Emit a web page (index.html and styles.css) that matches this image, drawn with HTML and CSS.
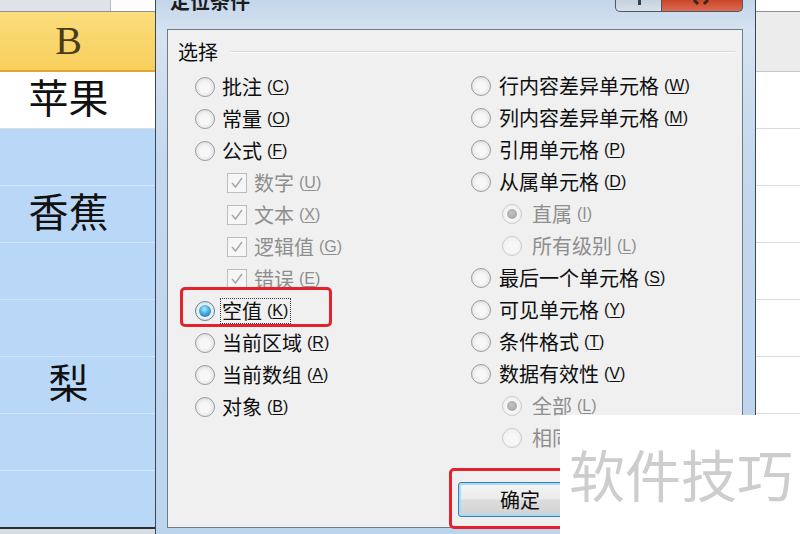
FILE: index.html
```html
<html>
<head>
    <meta charset="utf-8">
    <link rel="stylesheet" href="styles.css">
</head>
<body>

<div class="screen">

  <div class="sheet sheet-left">
    <div class="fbar"><div class="fbar-box"></div></div>
    <div class="colhead">B</div>
    <div class="cell">苹果</div>
    <div class="cell sel"></div>
    <div class="cell sel">香蕉</div>
    <div class="cell sel"></div>
    <div class="cell sel"></div>
    <div class="cell sel">梨</div>
    <div class="cell sel"></div>
    <div class="cell sel"></div>
  </div>

  <div class="dialog">
    <div class="titlebar">
      <div class="title">定位条件</div>
      <div class="caption-btns">
        <div class="cap cap-help">
          <svg width="47" height="12" viewBox="0 0 47 12"><rect x="22" y="0" width="3" height="5" fill="#3a3f45"/></svg>
        </div>
        <div class="cap cap-close">
          <svg width="80" height="12" viewBox="0 0 80 12"><path d="M32 0 L36 4 M46 0 L42 4" stroke="#3a2520" stroke-width="3"/></svg>
        </div>
      </div>
    </div>

    <div class="client">
      <div class="group-head">
        <span class="group-label">选择</span>
        <span class="group-line"></span>
      </div>

      <div class="options">
        <div class="col col-left">
          <div class="opt"><span class="radio"></span>批注<span class="key">(<u>C</u>)</span></div>
          <div class="opt"><span class="radio"></span>常量<span class="key">(<u>O</u>)</span></div>
          <div class="opt"><span class="radio"></span>公式<span class="key">(<u>F</u>)</span></div>
          <div class="opt sub off"><span class="check"><svg width="14" height="14" viewBox="0 0 14 14"><path d="M2 7 L5.5 11 L12 2" fill="none" stroke="#a9a9a9" stroke-width="1.6"/></svg></span>数字<span class="key">(<u>U</u>)</span></div>
          <div class="opt sub off"><span class="check"><svg width="14" height="14" viewBox="0 0 14 14"><path d="M2 7 L5.5 11 L12 2" fill="none" stroke="#a9a9a9" stroke-width="1.6"/></svg></span>文本<span class="key">(<u>X</u>)</span></div>
          <div class="opt sub off"><span class="check"><svg width="14" height="14" viewBox="0 0 14 14"><path d="M2 7 L5.5 11 L12 2" fill="none" stroke="#a9a9a9" stroke-width="1.6"/></svg></span>逻辑值<span class="key">(<u>G</u>)</span></div>
          <div class="opt sub off"><span class="check"><svg width="14" height="14" viewBox="0 0 14 14"><path d="M2 7 L5.5 11 L12 2" fill="none" stroke="#a9a9a9" stroke-width="1.6"/></svg></span>错误<span class="key">(<u>E</u>)</span></div>
          <div class="opt marked"><span class="radio on"></span><span class="focus">空值<span class="key">(<u>K</u>)</span></span><span class="mark mark-empty"></span></div>
          <div class="opt"><span class="radio"></span>当前区域<span class="key">(<u>R</u>)</span></div>
          <div class="opt"><span class="radio"></span>当前数组<span class="key">(<u>A</u>)</span></div>
          <div class="opt"><span class="radio"></span>对象<span class="key">(<u>B</u>)</span></div>
        </div>

        <div class="col col-right">
          <div class="opt"><span class="radio"></span>行内容差异单元格<span class="key">(<u>W</u>)</span></div>
          <div class="opt"><span class="radio"></span>列内容差异单元格<span class="key">(<u>M</u>)</span></div>
          <div class="opt"><span class="radio"></span>引用单元格<span class="key">(<u>P</u>)</span></div>
          <div class="opt"><span class="radio"></span>从属单元格<span class="key">(<u>D</u>)</span></div>
          <div class="opt sub2 off"><span class="radio dis dot"></span>直属<span class="key">(<u>I</u>)</span></div>
          <div class="opt sub2 off"><span class="radio dis"></span>所有级别<span class="key">(<u>L</u>)</span></div>
          <div class="opt"><span class="radio"></span>最后一个单元格<span class="key">(<u>S</u>)</span></div>
          <div class="opt"><span class="radio"></span>可见单元格<span class="key">(<u>Y</u>)</span></div>
          <div class="opt"><span class="radio"></span>条件格式<span class="key">(<u>T</u>)</span></div>
          <div class="opt"><span class="radio"></span>数据有效性<span class="key">(<u>V</u>)</span></div>
          <div class="opt sub2 off"><span class="radio dis dot"></span>全部<span class="key">(<u>L</u>)</span></div>
          <div class="opt sub2 off"><span class="radio dis"></span>相同</div>
        </div>
      </div>

      <div class="footer">
        <div class="btn btn-default">确定<span class="mark mark-ok"></span></div>
      </div>
    </div>
  </div>

  <div class="sheet sheet-right">
    <div class="fbar white"></div>
    <div class="colhead grey"></div>
    <div class="cell"></div>
    <div class="cell"></div>
    <div class="cell"></div>
    <div class="cell"></div>
    <div class="cell"></div>
    <div class="cell"></div>
    <div class="cell"></div>
    <div class="cell"></div>
  </div>

  <div class="watermark">软件技巧</div>
</div>

</body>
</html>
```

FILE: styles.css
```css
* {
  margin: 0px;
  padding: 0px;
  box-sizing: border-box;
}
body {
  width: 800px;
  height: 534px;
  overflow: hidden;
  background: #fff;
  font-family: "Noto Sans CJK SC", "Noto Sans", sans-serif;
}
.screen {
  position: relative;
  display: flex;
  width: 800px;
  height: 534px;
  overflow: hidden;
}

/* spreadsheet strips */
.sheet {
  display: flex;
  flex-direction: column;
  font-family: "Liberation Serif", "Noto Sans CJK SC", serif;
}
.sheet-left {
  width: 155px;
  flex: none;
  background: #d8dde3;
}
.sheet-right {
  flex: 1;
}
.fbar {
  height: 12px;
  flex: none;
  background: #dfe3e8;
  border-bottom: 1px solid #8e9296;
  display: flex;
  justify-content: flex-end;
}
.fbar-box {
  width: 45px;
  background: #fdfdfd;
  border-left: 1px solid #b8bcc0;
}
.fbar.white {
  background: #fff;
}
.colhead {
  height: 60px;
  flex: none;
  background: linear-gradient(#fbdd7c, #f7cf5c);
  border-bottom: 2px solid #e3a53a;
  color: #4a3c18;
  font-size: 40px;
  line-height: 58px;
  text-align: center;
  padding-right: 18px;
}
.colhead.grey {
  background: #ececec;
  border-bottom: 1px solid #c6c6c6;
}
.cell {
  height: 57px;
  flex: none;
  background: #fff;
  border-bottom: 1px solid #dadcdf;
  color: #111;
  font-size: 40px;
  line-height: 56px;
  text-align: center;
  padding-right: 18px;
}
.cell.sel {
  background: #b9d8f7;
  border-bottom-color: #d3e5f8;
}
.sheet-left .cell:last-child {
  border-bottom: 2px solid #2e2e2e;
  height: 58px;
}

/* dialog window */
.dialog {
  width: 601px;
  flex: none;
  display: flex;
  flex-direction: column;
  padding: 0 12px 6px 11px;
  background: linear-gradient(#c3d6ea, #d6e3f1 6%, #c4d8ee 30%, #bcd4ee);
  border-left: 1px solid #3d4650;
  border-right: 1px solid #3d4650;
}
.titlebar {
  height: 29px;
  flex: none;
  display: flex;
  align-items: flex-start;
}
.title {
  margin-top: -9px;
  padding-left: 3px;
  font-size: 20px;
  line-height: 20px;
  color: #1c1c1c;
  font-weight: bold;
}
.caption-btns {
  margin-left: auto;
  display: flex;
}
.cap {
  height: 12px;
  border: 1px solid #50585f;
  border-top: none;
}
.cap svg {
  display: block;
}
.cap-help {
  width: 47px;
  border-radius: 0 0 0 5px;
  background: linear-gradient(#c6d1dc, #d8e1ea);
}
.cap-close {
  width: 81px;
  border-left: none;
  border-radius: 0 0 5px 0;
  background: linear-gradient(#c9462a, #dc6a50);
}
.client {
  flex: 1;
  display: flex;
  flex-direction: column;
  background: #f0f0f0;
  border: 1px solid #6f7c88;
  padding: 10px 7px 0 10px;
  color: #0e0e0e;
  font-size: 20px;
}
.group-head {
  display: flex;
  align-items: center;
  height: 24px;
}
.group-label {
  line-height: 24px;
}
.group-line {
  flex: 1;
  margin-left: 12px;
  border-top: 1px solid #d5dadf;
  border-bottom: 1px solid #fff;
}
.options {
  display: flex;
  margin-top: 7px;
  padding-left: 17px;
}
.col-left {
  width: 276px;
}
.col-right {
  margin-top: -1px;
}
.opt {
  position: relative;
  display: flex;
  align-items: center;
  height: 32px;
  line-height: 24px;
  white-space: nowrap;
}
.opt.sub {
  padding-left: 32px;
}
.opt.sub2 {
  padding-left: 31px;
}
.opt.off {
  color: #8e8e8e;
}
.key {
  margin-left: 5px;
  font-family: "Liberation Sans", sans-serif;
  font-size: 16px;
}
.key u {
  text-underline-offset: 2px;
}

.radio {
  position: relative;
  width: 20px;
  height: 20px;
  flex: none;
  margin-right: 7px;
  border-radius: 50%;
  border: 1px solid #989a9c;
  background: radial-gradient(circle at 50% 55%, #f7f7f7 35%, #d4d5d6 100%);
}
.col-right .radio {
  margin-right: 8px;
}
.opt.sub2 .radio {
  margin-right: 10px;
}
.radio.dis {
  border-color: #c9cacb;
  background: radial-gradient(circle at 50% 55%, #f7f7f7 40%, #e6e6e6 100%);
}
.radio.dot::after {
  content: "";
  position: absolute;
  left: 4px;
  top: 4px;
  width: 10px;
  height: 10px;
  border-radius: 50%;
  background: radial-gradient(circle at 45% 40%, #c4c4c4, #9c9c9c);
}
.radio.on {
  border-color: #5a86a8;
}
.radio.on::after {
  content: "";
  position: absolute;
  left: 3px;
  top: 3px;
  width: 12px;
  height: 12px;
  border-radius: 50%;
  background: radial-gradient(circle at 45% 35%, #b9ecff 0%, #4ab5e8 40%, #165f97 100%);
}
.check {
  width: 20px;
  height: 20px;
  flex: none;
  margin-right: 7px;
  border: 1px solid #bdbdbd;
  background: #f6f6f6;
  display: flex;
  align-items: center;
  justify-content: center;
}
.check svg {
  display: block;
}
.focus {
  display: flex;
  align-items: center;
  padding: 0 2px 0 1px;
  outline: 1px dotted #3a3a3a;
  outline-offset: 0;
  margin-left: -1px;
}

/* red annotation boxes */
.mark {
  position: absolute;
  border: 3px solid #e3222b;
  border-radius: 5px;
}
.mark-empty {
  left: -15px;
  top: -8px;
  width: 152px;
  height: 40px;
}
.mark-ok {
  left: -10px;
  top: -15px;
  width: 260px;
  height: 61px;
}

.footer {
  margin-top: auto;
  padding: 0 0 10px 280px;
  display: flex;
}
.btn {
  position: relative;
  width: 126px;
  height: 35px;
  border: 1px solid #707070;
  border-radius: 3px;
  background: linear-gradient(#f4f4f4, #ebebeb 48%, #dcdcdc 52%, #d2d2d2);
  line-height: 33px;
  font-size: 20px;
  padding-left: 41px;
}
.btn-default {
  border-color: #3c7fb1;
  box-shadow: inset 0 0 0 2px #a6dcf5;
}

.watermark {
  position: absolute;
  left: 560px;
  top: 415px;
  width: 240px;
  height: 119px;
  background: #fff;
  padding: 28px 0 0 9px;
  color: #cdcdcd;
  font-size: 56px;
  line-height: 60px;
  white-space: nowrap;
}
```
